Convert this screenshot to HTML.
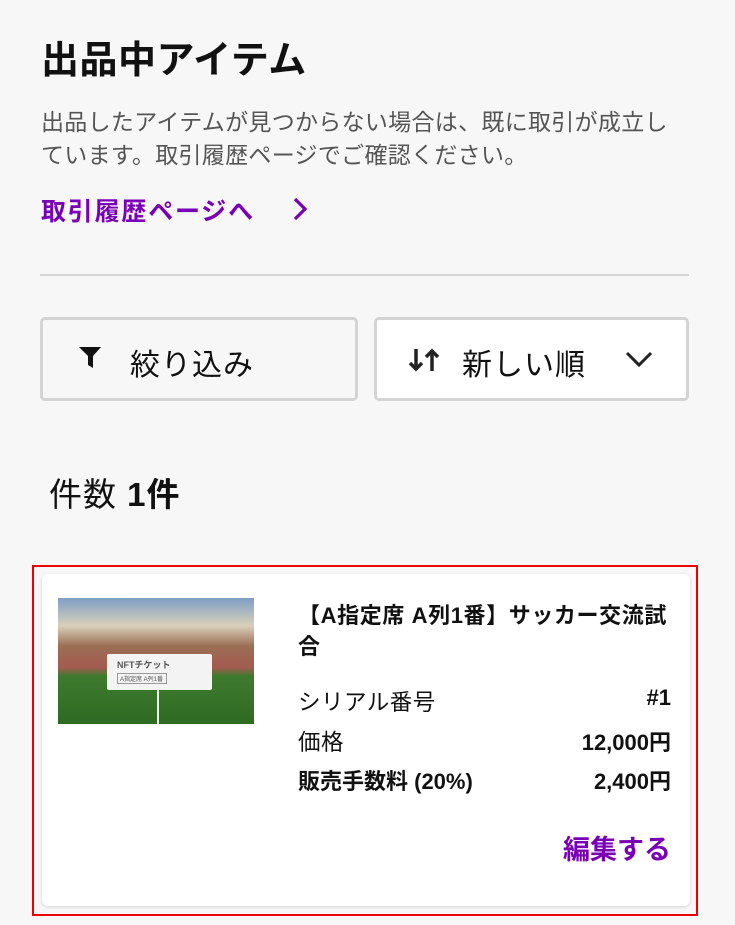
<!DOCTYPE html>
<html><head><meta charset="utf-8"><style>
*{margin:0;padding:0;box-sizing:border-box}
body{width:735px;height:925px;background:#f7f7f7;font-family:"Liberation Sans","Noto Sans CJK JP",sans-serif;color:#111;position:relative;overflow:hidden}
.a{position:absolute;white-space:nowrap}
.btn{position:absolute;top:317px;height:84px;border:3px solid #d4d4d4;border-radius:5px}
</style></head><body>
<div class="a" style="left:41px;top:29px;font-size:38px;font-weight:bold;letter-spacing:0.5px">出品中アイテム</div>
<div class="a" style="left:41px;top:106px;font-size:23px;color:#555;line-height:33px;letter-spacing:0.3px">出品したアイテムが見つからない場合は、既に取引が成立し<br>ています。取引履歴ページでご確認ください。</div>
<div class="a" style="left:41px;top:192px;font-size:25px;font-weight:bold;color:#7a00b8;letter-spacing:1.8px">取引履歴ページへ</div>
<svg class="a" style="left:289px;top:196px" width="22" height="26"><path d="M6 3l10 10-10 10" stroke="#7a00b8" stroke-width="3.2" fill="none"/></svg>
<div class="a" style="left:40px;top:274px;width:649px;height:2px;background:#d4d4d4"></div>
<div class="btn" style="left:40px;width:318px;background:#f7f7f7"></div>
<svg class="a" style="left:78px;top:346px" width="26" height="24"><path d="M1 1h22l-8 9v12l-5-3v-9z" fill="#111"/></svg>
<div class="a" style="left:130px;top:340px;font-size:30px;letter-spacing:1px">絞り込み</div>
<div class="btn" style="left:374px;width:315px;background:#fff"></div>
<svg class="a" style="left:408px;top:347px" width="34" height="26"><path d="M8 2v20M2 16l6 6 6-6M24 24V4M18 10l6-6 6 6" stroke="#222" stroke-width="3.5" fill="none"/></svg>
<div class="a" style="left:462px;top:340px;font-size:30px;letter-spacing:1px">新しい順</div>
<svg class="a" style="left:624px;top:350px" width="30" height="20"><path d="M3 3l12 12 12-12" stroke="#222" stroke-width="3" fill="none"/></svg>
<div class="a" style="left:49px;top:468px;font-size:33px;letter-spacing:1px">件数 <b>1件</b></div>
<div class="a" style="left:32px;top:565px;width:666px;height:351px;border:2px solid #e00"></div>
<div class="a" style="left:42px;top:574px;width:648px;height:332px;background:#fff;border-radius:6px;box-shadow:0 1px 3px rgba(0,0,0,.15)"></div>
<div class="a" style="left:58px;top:598px;width:196px;height:126px;background:linear-gradient(#7f9fc4 0%,#d8d0bb 22%,#9b7055 38%,#a45a50 55%,#3d7a2e 62%,#2f6a22 100%)">
<div style="position:absolute;left:49px;top:56px;width:105px;height:36px;background:#f3f3f3;border-radius:2px;font-size:9px;color:#555;padding:4px 10px;font-weight:bold">NFTチケット<div style="font-size:6px;border:1px solid #999;margin-top:2px;width:50px;padding:0 2px;font-weight:normal">A指定席 A列1番</div></div>
<div style="position:absolute;left:99px;top:92px;width:2px;height:34px;background:#eee"></div></div>
<div class="a" style="left:298px;top:600px;font-size:22px;font-weight:bold;line-height:31px;letter-spacing:0.6px">【A指定席 A列1番】サッカー交流試<br>合</div>
<div class="a" style="left:298px;top:685px;font-size:22.5px;letter-spacing:0.5px">シリアル番号</div>
<div class="a" style="right:64px;top:685px;font-size:22px;font-weight:bold;">#1</div>
<div class="a" style="left:298px;top:725px;font-size:22.5px;letter-spacing:0.5px">価格</div>
<div class="a" style="right:64px;top:725px;font-size:22px;font-weight:bold;">12,000円</div>
<div class="a" style="left:298px;top:764px;font-size:22px;font-weight:bold;">販売手数料 (20%)</div>
<div class="a" style="right:64px;top:764px;font-size:22px;font-weight:bold;">2,400円</div>
<div class="a" style="right:64px;top:828px;font-size:27px;font-weight:bold;color:#7a00b8;">編集する</div>
</body></html>
